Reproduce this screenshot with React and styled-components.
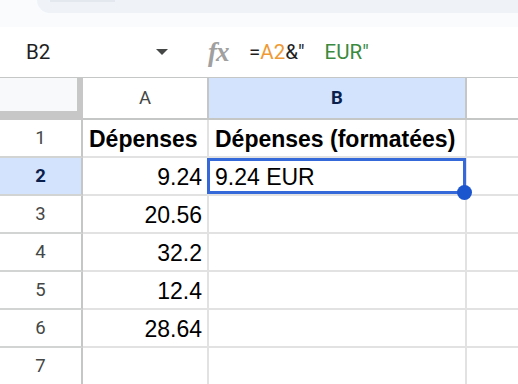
import React from 'react';
import styled, { createGlobalStyle } from 'styled-components';

const Global = createGlobalStyle`
  html, body { margin: 0; padding: 0; background: #ffffff; }
  body { width: 518px; height: 384px; overflow: hidden; font-family: Roboto, "Liberation Sans", Arial, sans-serif; }
  * { box-sizing: border-box; }
`;

const Page = styled.div`
  width: 518px;
  height: 384px;
  overflow: hidden;
  display: flex;
  flex-direction: column;
  background: #ffffff;
`;

const TopStrip = styled.div`
  height: 27px;
  flex-shrink: 0;
  background: #f9fbfd;
  display: flex;
  padding-left: 37px;
`;

const SearchPill = styled.div`
  flex: 1;
  height: 13px;
  background: #eff3f8;
  border-bottom-left-radius: 14px;
  padding-left: 13px;
`;

const PillMark = styled.div`
  width: 65px;
  height: 2px;
  background: #e3e8ef;
`;

const FormulaBar = styled.div`
  height: 51px;
  flex-shrink: 0;
  border-bottom: 1px solid #c4c7c5;
  display: flex;
  align-items: center;
`;

const NameBox = styled.div`
  width: 182px;
  padding: 0 14px 0 26px;
  display: flex;
  align-items: center;
  justify-content: space-between;
  font-family: Roboto, "Liberation Sans", sans-serif;
  font-size: 20.5px;
  color: #1f1f1f;
`;

const Caret = styled.span`
  width: 0;
  height: 0;
  border-left: 6.5px solid transparent;
  border-right: 6.5px solid transparent;
  border-top: 6px solid #444746;
`;

const FxIcon = styled.span`
  margin-left: 26px;
  width: 26px;
  font-family: "Liberation Serif", "DejaVu Serif", serif;
  font-style: italic;
  font-weight: bold;
  font-size: 27px;
  letter-spacing: -1px;
  color: #a0a0a0;
  line-height: 1;
`;

const Formula = styled.div`
  margin-left: 15px;
  font-family: Roboto, "Liberation Sans", sans-serif;
  font-size: 20.5px;
  color: #1f1f1f;
  white-space: pre;
`;

const Ref = styled.span`
  color: #ef9a34;
`;

const Str = styled.span`
  color: #3b8a3e;
  word-spacing: 15px;
`;

const Sheet = styled.div`
  display: grid;
  grid-template-columns: 83px 126px 258px 1fr;
  grid-template-rows: 42px;
  grid-auto-rows: 38px;
`;

const Corner = styled.div`
  background: #f8f9fa;
  border-right: 6px solid #c7c7c7;
  border-bottom: 9px solid #c7c7c7;
`;

const ColHeader = styled.div`
  display: flex;
  align-items: center;
  justify-content: center;
  font-family: Roboto, "Liberation Sans", sans-serif;
  font-size: 18.5px;
  border-right: ${p => (p.$last ? 'none' : '2px solid #c4c7c5')};
  border-bottom: 2px solid #c4c7c5;
  background: ${p => (p.$sel ? '#d3e3fd' : '#ffffff')};
  color: ${p => (p.$sel ? '#0b1f4d' : '#444746')};
  font-weight: ${p => (p.$sel ? 700 : 400)};
`;

const RowHeader = styled.div`
  display: flex;
  align-items: center;
  justify-content: center;
  font-family: Roboto, "Liberation Sans", sans-serif;
  font-size: 18.5px;
  border-right: 2px solid #c4c7c5;
  border-bottom: 2px solid #d2d4d4;
  background: ${p => (p.$sel ? '#d3e3fd' : '#ffffff')};
  color: ${p => (p.$sel ? '#0b1f4d' : '#444746')};
  font-weight: ${p => (p.$sel ? 700 : 400)};
`;

const DataCell = styled.div`
  position: relative;
  display: flex;
  align-items: flex-end;
  justify-content: ${p => (p.$align === 'right' ? 'flex-end' : 'flex-start')};
  padding: 0 5px 3px 6px;
  font-family: "Liberation Sans", Arial, sans-serif;
  font-size: 23px;
  font-weight: ${p => (p.$bold ? 700 : 400)};
  color: #000000;
  white-space: nowrap;
  border-right: ${p => (p.$last ? 'none' : '2px solid #e2e2e2')};
  border-bottom: 2px solid #e2e2e2;
`;

const Selection = styled.div`
  position: absolute;
  top: 0;
  left: -2px;
  right: -1px;
  bottom: 0;
  border: 3px solid #3568d9;
  z-index: 2;
  pointer-events: none;
`;

const Handle = styled.div`
  position: absolute;
  right: -9px;
  bottom: -9px;
  width: 15px;
  height: 15px;
  border-radius: 50%;
  background: #1c56cf;
`;

const rows = [
  { n: 1, a: 'Dépenses', b: 'Dépenses (formatées)', bold: true, aAlign: 'left' },
  { n: 2, a: '9.24', b: '9.24 EUR', sel: true },
  { n: 3, a: '20.56', b: '' },
  { n: 4, a: '32.2', b: '' },
  { n: 5, a: '12.4', b: '' },
  { n: 6, a: '28.64', b: '' },
  { n: 7, a: '', b: '' },
];

export default function App() {
  return (
    <Page>
      <Global />
      <TopStrip>
        <SearchPill>
          <PillMark />
        </SearchPill>
      </TopStrip>
      <FormulaBar>
        <NameBox>
          <span>B2</span>
          <Caret />
        </NameBox>
        <FxIcon>fx</FxIcon>
        <Formula>
          =<Ref>A2</Ref>&amp;"<Str> EUR"</Str>
        </Formula>
      </FormulaBar>
      <Sheet>
        <Corner />
        <ColHeader>A</ColHeader>
        <ColHeader $sel>B</ColHeader>
        <ColHeader $last />
        {rows.map(r => (
          <React.Fragment key={r.n}>
            <RowHeader $sel={r.sel}>{r.n}</RowHeader>
            <DataCell $bold={r.bold} $align={r.aAlign || 'right'}>{r.a}</DataCell>
            <DataCell $bold={r.bold} $align="left">
              {r.b}
              {r.sel && (
                <Selection>
                  <Handle />
                </Selection>
              )}
            </DataCell>
            <DataCell $last />
          </React.Fragment>
        ))}
      </Sheet>
    </Page>
  );
}
